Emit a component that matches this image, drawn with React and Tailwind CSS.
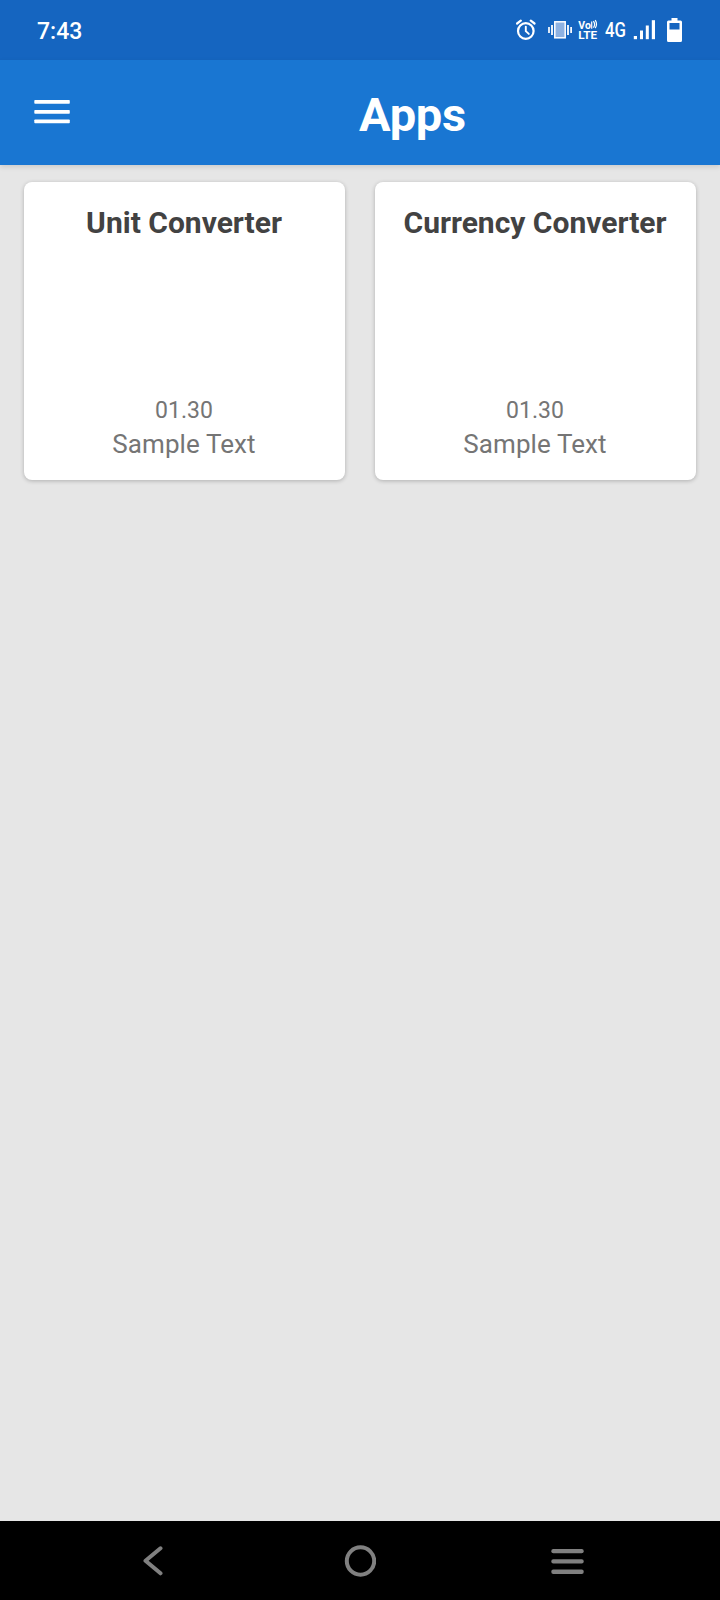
const apps = [
  { name: "Unit Converter", version: "01.30", note: "Sample Text" },
  { name: "Currency Converter", version: "01.30", note: "Sample Text" },
];

function AlarmIcon() {
  return (
    <svg className="h-[22px] w-[20px]" viewBox="0 0 20 22" fill="none" stroke="white" strokeLinecap="round">
      <circle cx="9.800" cy="12" r="7.800" strokeWidth="2.2" />
      <path d="M9.800 7.600v4.6l3 2.7" strokeWidth="1.9" />
      <path d="M1.100 4.500L4.800 1.700M18.500 4.500L14.800 1.700" strokeWidth="2.2" />
    </svg>
  );
}

function VibrateIcon() {
  return (
    <svg className="ml-[12px] h-[20px] w-[24px]" viewBox="0 0 24 20">
      <rect x="6.8" y="1.800" width="10.4" height="16" fill="#8eb2e2" stroke="white" strokeWidth="1.5" />
      <path d="M4 5v10M20 5v10" stroke="white" strokeWidth="1.8" />
      <path d="M1 7v6M23.1 7v6" stroke="white" strokeWidth="1.7" />
    </svg>
  );
}

function VolteIcon() {
  return (
    <svg className="ml-[6px] h-[24px] w-[20px]" viewBox="0 0 20 24" fill="white" fontFamily="Roboto, sans-serif" fontWeight="700">
      <text x="0.3" y="10.800" fontSize="10.400" textLength="12.500" lengthAdjust="spacingAndGlyphs">Vo</text>
      <path d="M13.700 3.400V10.800M15.400 3.200q2.400 3.200 0 6.500M17.200 2.200q2.600 4 0 8" fill="none" stroke="white" strokeWidth="1.2" />
      <text x="0.3" y="20.900" fontSize="10.800" textLength="18.8" lengthAdjust="spacingAndGlyphs">LTE</text>
    </svg>
  );
}

function SignalIcon() {
  return (
    <svg className="ml-[7px] h-[20px] w-[22px]" viewBox="0 0 22 20" fill="white">
      <rect x="0.800" y="16" width="3.200" height="3.200" />
      <rect x="7" y="10.500" width="3" height="8.700" />
      <rect x="12.800" y="5.500" width="3" height="13.700" />
      <rect x="18.800" y="0.200" width="3.200" height="19" />
    </svg>
  );
}

function BatteryIcon() {
  return (
    <svg className="ml-[12px] h-[24px] w-[15px]" viewBox="0 0 15 24">
      <path fill="white" fillRule="evenodd" d="M4.5 0h6v2.5H13.5q1.5 0 1.5 1.5v18.5q0 1.5-1.5 1.5h-12Q0 24 0 22.500V4Q0 2.500 1.500 2.500H4.500zM2.500 5v6.500h10V5z" />
    </svg>
  );
}

function StatusBar() {
  return (
    <div className="flex h-[60px] items-center justify-between bg-[#1565c0] pr-[38px] pl-[37px] text-white">
      <span className="pt-[4px] text-[23px] leading-7 font-medium">7:43</span>
      <div className="flex items-center">
        <AlarmIcon />
        <VibrateIcon />
        <VolteIcon />
        <span className="ml-[7px] w-[21px] origin-left scale-x-[0.84] text-[20px] leading-6 font-medium">4G</span>
        <SignalIcon />
        <BatteryIcon />
      </div>
    </div>
  );
}

function AppBar() {
  return (
    <header className="flex h-[105px] items-center bg-[#1976d2] text-white shadow-[0_2px_5px_rgba(0,0,0,0.12)]">
      <button aria-label="Menu" className="mt-[-2px] ml-[34px]">
        <svg className="block h-[24px] w-[36px]" viewBox="0 0 36 24" fill="white">
          <rect x="0.300" y="0" width="35.500" height="3.800" rx="0.8" />
          <rect x="0.300" y="10" width="35.500" height="3.800" rx="0.8" />
          <rect x="0.300" y="19.500" width="35.500" height="3.800" rx="0.8" />
        </svg>
      </button>
      <h1 className="ml-[289px] pt-[5px] text-[47px] leading-[56px] font-bold tracking-[-0.2px]">Apps</h1>
    </header>
  );
}

function AppCard({ name, version, note }) {
  return (
    <article className="flex h-[298px] flex-col items-center justify-between rounded-[8px] bg-white pt-[23px] pr-px pb-[18px] shadow-[0_1px_4px_rgba(0,0,0,0.24)]">
      <h2 className="text-[30px] leading-[36px] font-bold whitespace-nowrap text-[#424242]">{name}</h2>
      <div className="flex flex-col items-center text-[#757575]">
        <span className="-mb-px text-[23px] leading-[32px]">{version}</span>
        <span className="text-[26px] leading-[36px] tracking-[0.08px]">{note}</span>
      </div>
    </article>
  );
}

function NavBar() {
  return (
    <nav className="flex h-[79px] items-center bg-black pl-[143px]">
      <svg className="h-[32px] w-[20px]" viewBox="0 0 20 32" fill="none" stroke="#808080" strokeWidth="4" strokeLinecap="round" strokeLinejoin="round">
        <path d="M17.500 3.300L2.500 15.700L17.500 28.300" />
      </svg>
      <svg className="ml-[181px] h-[32px] w-[32px]" viewBox="0 0 32 32" fill="none" stroke="#808080" strokeWidth="4">
        <circle cx="16.500" cy="16" r="13.7" />
      </svg>
      <svg className="ml-[175px] h-[32px] w-[33px]" viewBox="0 0 33 32" fill="#808080">
        <rect y="4" x="0.300" width="32.400" height="4.300" rx="2" />
        <rect y="14.300" x="0.300" width="32.400" height="4.300" rx="2" />
        <rect y="24.600" x="0.300" width="32.400" height="4.300" rx="2" />
      </svg>
    </nav>
  );
}

export default function App() {
  return (
    <div className="flex h-[1600px] w-[720px] flex-col bg-[#e6e6e6] font-['Roboto',sans-serif]">
      <StatusBar />
      <AppBar />
      <main className="grid flex-1 grid-cols-2 content-start gap-[30px] px-6 pt-[17px]">
        {apps.map((app) => (
          <AppCard key={app.name} {...app} />
        ))}
      </main>
      <NavBar />
    </div>
  );
}
